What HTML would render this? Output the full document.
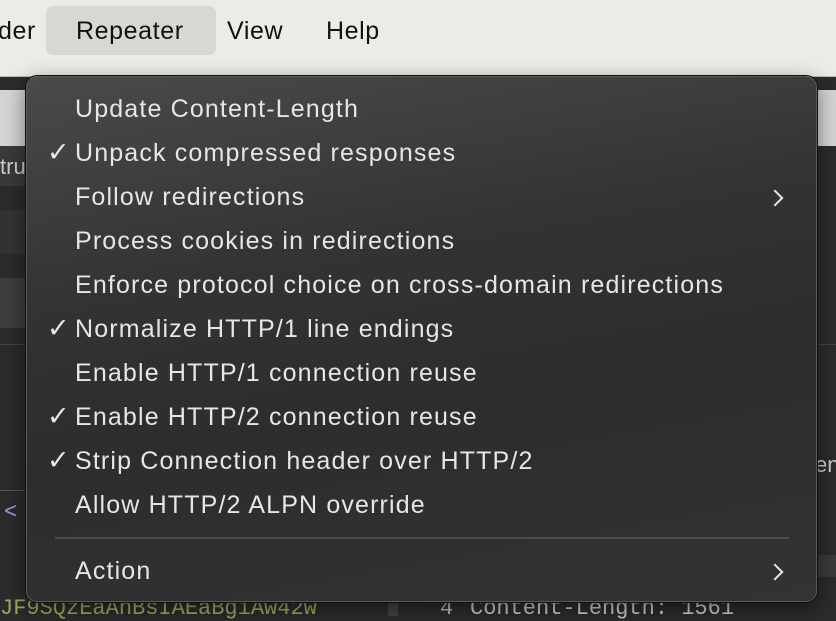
<!DOCTYPE html>
<html><head><style>
body{margin:0;width:836px;height:616px;overflow:hidden;background:#2b2b2b;font-family:"Liberation Sans",sans-serif;position:relative}
.bar{position:absolute;left:0;top:0;width:836px;height:76px;background:#ecebe6;border-bottom:1px solid #bbb}
.bar span{position:absolute;top:17px;font-size:25px;color:#111;letter-spacing:0.6px}
.hl{position:absolute;left:46px;top:6px;width:170px;height:49px;background:#d9d7d1;border-radius:7px}
.bg{position:absolute}
.menu{position:absolute;left:26px;top:76px;width:789px;height:524px;border-radius:11px;background:linear-gradient(170deg,#4a4a4a 0%,#333 35%,#2d2d2d 60%,#333 100%);border:1px solid #5a5a5a;box-shadow:0 0 0 1px #111,0 6px 20px rgba(0,0,0,.5)}
.it{position:absolute;left:48px;font-size:25px;color:#e6e6e6;line-height:30px;letter-spacing:1.15px;white-space:nowrap}
.ck{position:absolute;left:20px;font-size:27px;font-weight:bold;color:#e6e6e6;line-height:30px;font-family:"DejaVu Sans",sans-serif}
.ar{position:absolute;left:742px;width:10px;height:10px;border-right:2.5px solid #e6e6e6;border-top:2.5px solid #e6e6e6;transform:rotate(45deg)}
.sep{position:absolute;left:28px;top:460px;width:734px;height:2px;background:#4c4c4c}
.mono{font-family:"Liberation Mono",monospace;position:absolute;font-size:22px}
</style></head><body>
<div class="bg" style="left:0;top:90px;width:26px;height:56px;background:#d4d4d4"></div>
<div class="bg" style="left:815px;top:90px;width:21px;height:56px;background:#d4d4d4"></div>
<div class="bg" style="left:0;top:146px;width:26px;height:40px;background:#3a3a3a"></div>
<span class="bg" style="left:0;top:154px;color:#ccc;font-size:22px">tru</span>
<div class="bg" style="left:0;top:210px;width:26px;height:44px;background:#333"></div>
<div class="bg" style="left:0;top:278px;width:26px;height:50px;background:#3c3e3e"></div>
<div class="bg" style="left:0;top:344px;width:836px;height:1px;background:#444"></div>
<div class="bg" style="left:0;top:490px;width:26px;height:1px;background:#555"></div>
<span class="mono" style="left:4px;top:500px;color:#8fa0e0">&lt;</span>
<span class="mono" style="left:0;top:596px;color:#9aab5a">JF9SQzEaAnBsIAEaBgiAw42w</span>
<div class="bg" style="left:388px;top:600px;width:10px;height:16px;background:#444"></div>
<span class="mono" style="left:440px;top:596px;color:#bbb">4</span>
<span class="mono" style="left:470px;top:596px;color:#ccc">Content-Length: 1561</span>
<span class="bg" style="left:815px;top:452px;color:#ccc;font-size:22px">en</span>
<div class="bg" style="left:815px;top:555px;width:21px;height:22px;background:#3a3a3a"></div>
<div class="bar"><div class="hl"></div>
<span style="left:-2px">der</span><span style="left:76px">Repeater</span><span style="left:227px">View</span><span style="left:326px">Help</span></div>
<div class="menu">
<div class="it" style="top:17px">Update Content-Length</div>
<div class="ck" style="top:61px">✓</div><div class="it" style="top:61px">Unpack compressed responses</div>
<div class="it" style="top:105px">Follow redirections</div><div class="ar" style="top:115px;left:742px"></div>
<div class="it" style="top:149px">Process cookies in redirections</div>
<div class="it" style="top:193px">Enforce protocol choice on cross-domain redirections</div>
<div class="ck" style="top:237px">✓</div><div class="it" style="top:237px">Normalize HTTP/1 line endings</div>
<div class="it" style="top:281px">Enable HTTP/1 connection reuse</div>
<div class="ck" style="top:325px">✓</div><div class="it" style="top:325px">Enable HTTP/2 connection reuse</div>
<div class="ck" style="top:369px">✓</div><div class="it" style="top:369px">Strip Connection header over HTTP/2</div>
<div class="it" style="top:413px">Allow HTTP/2 ALPN override</div>
<div class="sep"></div>
<div class="it" style="top:479px">Action</div><div class="ar" style="top:489px;left:742px"></div>
</div>
</body></html>
